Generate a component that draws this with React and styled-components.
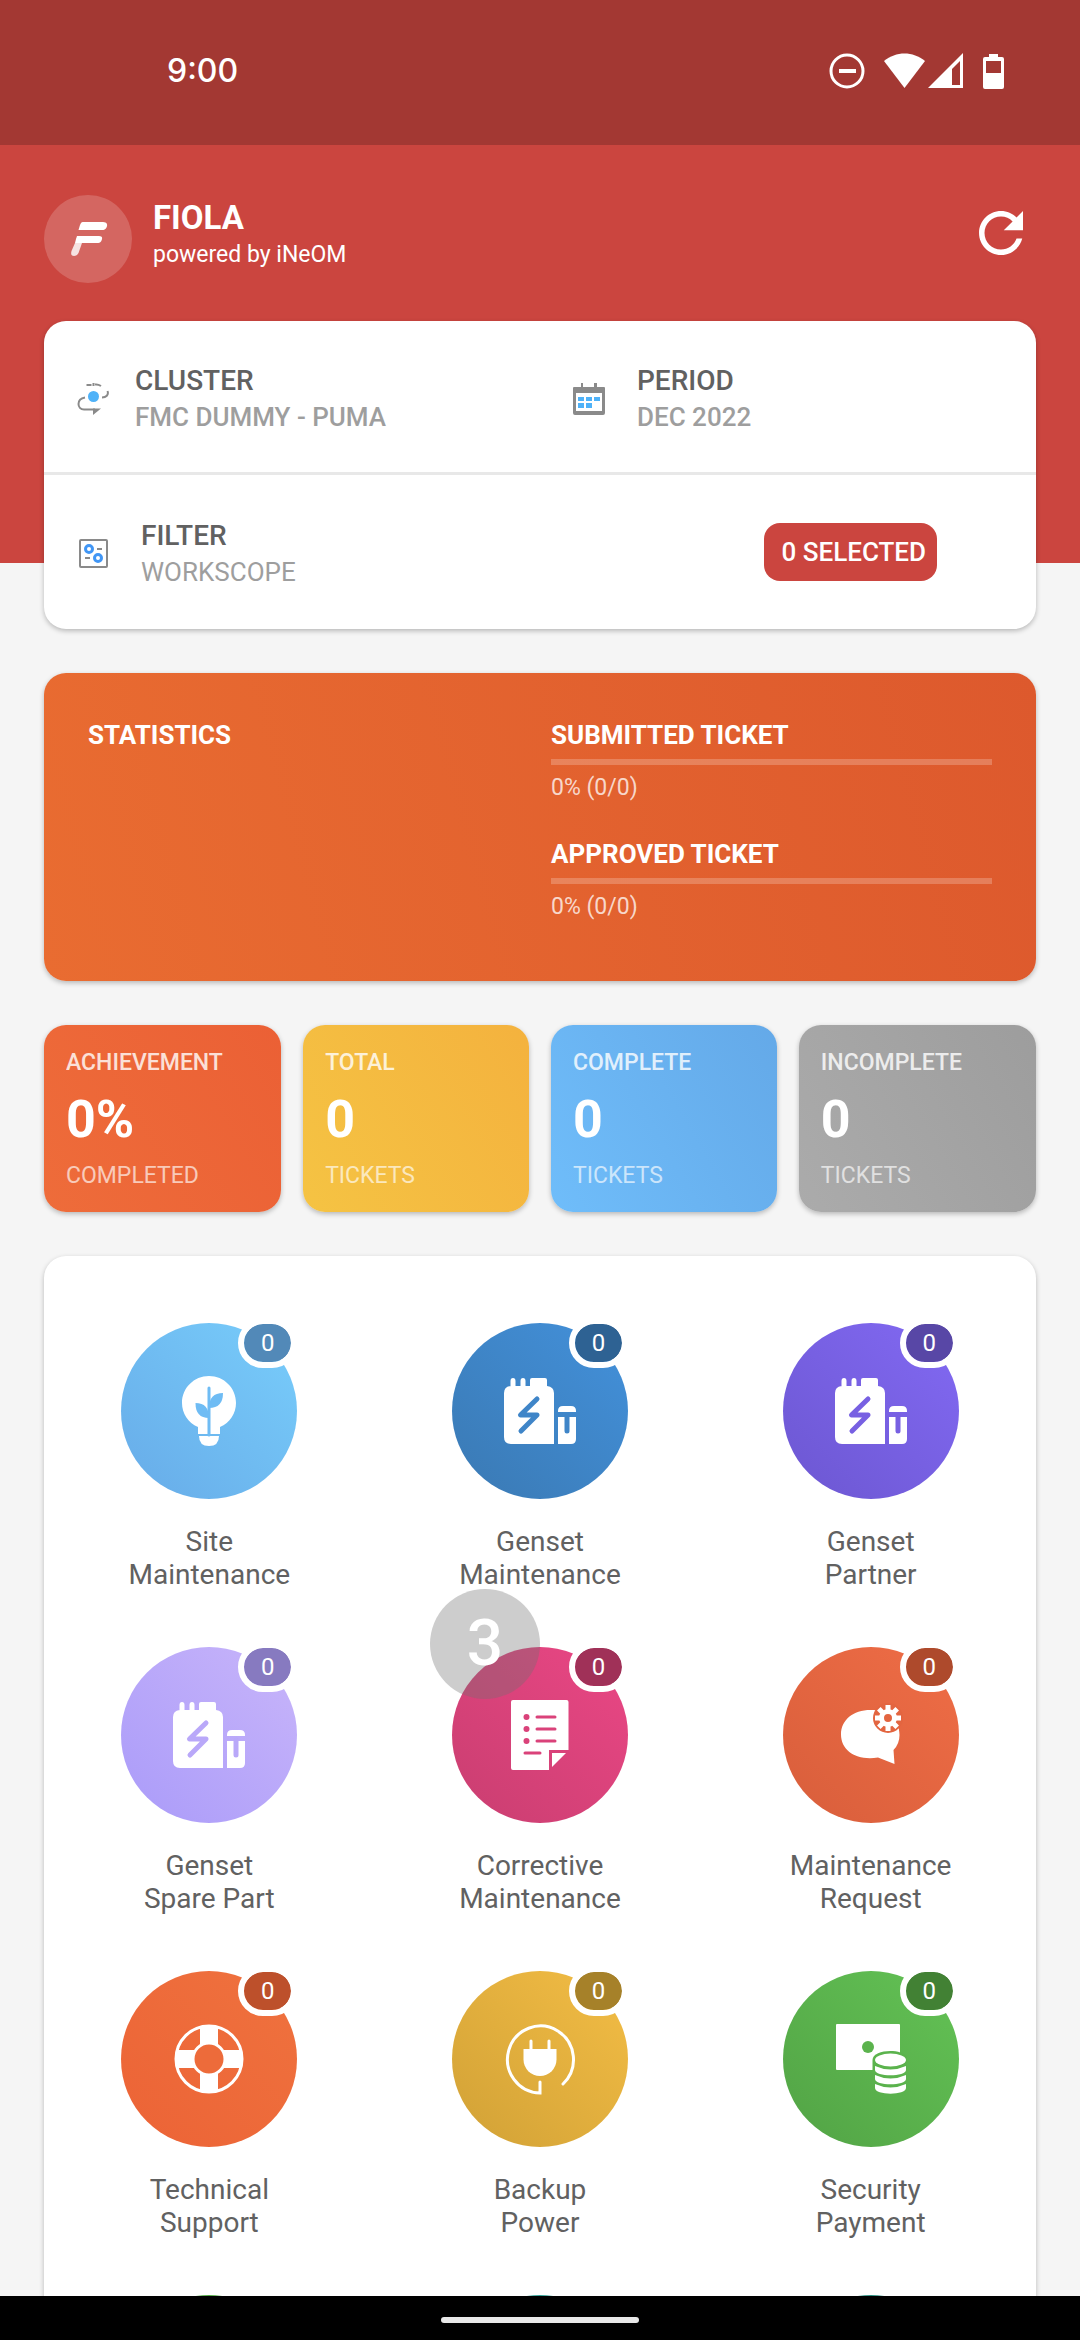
import styled, { createGlobalStyle } from 'styled-components';

const GlobalStyle = createGlobalStyle`
    * {
        box-sizing: border-box;
    }

    body {
        margin: 0;
        background-color: #f5f5f5;
        font-family: Roboto, "Liberation Sans", sans-serif;
    }

    button {
        font-family: inherit;
        border: none;
        background: none;
        padding: 0;
        margin: 0;
        text-align: left;
        cursor: pointer;
    }

    svg {
        display: block;
        flex-shrink: 0;
    }
`;

const Screen = styled.div`
    display: flex;
    flex-direction: column;
    height: 100vh;
    overflow: hidden;
`;

const StatusBar = styled.div`
    display: flex;
    justify-content: space-between;
    align-items: center;
    height: 145px;
    padding: 0 75px 4px 167px;
    background-color: #a33833;
    color: white;
    flex-shrink: 0;
`;

const Clock = styled.span`
    font-family: Inter, Roboto, sans-serif;
    font-size: 32px;
    font-weight: 500;
`;

const StatusIcons = styled.div`
    display: flex;
    align-items: center;
`;

const Body = styled.div`
    flex: 1;
    min-height: 0;
    overflow: hidden;
`;

const Header = styled.header`
    display: flex;
    align-items: flex-start;
    padding: 50px 46px 280px 44px;
    background-color: #cb453f;
    color: white;
`;

const Logo = styled.div`
    display: flex;
    align-items: center;
    justify-content: center;
    width: 88px;
    height: 88px;
    border-radius: 50%;
    background-color: rgba(255, 255, 255, 0.18);
`;

const Brand = styled.div`
    flex: 1;
    padding: 4px 0 0 21px;
`;

const BrandName = styled.h1`
    margin: 0;
    font-size: 33px;
    line-height: 38px;
    font-weight: 700;
`;

const BrandNote = styled.p`
    margin: 0;
    font-size: 23px;
    line-height: 36px;
`;

const RefreshButton = styled.button`
    margin-top: 5px;
    color: white;
`;

const Content = styled.main`
    position: relative;
    display: flex;
    flex-direction: column;
    gap: 44px;
    margin-top: -242px;
    padding: 0 44px;
`;

const Card = styled.section`
    background-color: white;
    border-radius: 22px;
    box-shadow: 0 2px 5px rgba(0, 0, 0, 0.25);
`;

const CardRow = styled.div`
    display: grid;
    grid-template-columns: 1fr 1fr;
    border-bottom: 3px solid #e8e8e8;
`;

const FilterRow = styled.div`
    display: flex;
    align-items: center;
    justify-content: space-between;
    padding: 1px 99px 2px 0;
`;

const Field = styled.button`
    display: flex;
    align-items: center;
    gap: ${({ $gap }) => $gap || '26px'};
    padding: 41px 0 36px 33px;
`;

const FieldLabel = styled.span`
    display: block;
    font-size: 28px;
    line-height: 37px;
    font-weight: 500;
    color: #616161;
`;

const FieldValue = styled.span`
    display: block;
    font-size: 26px;
    line-height: 37px;
    font-weight: ${({ $weight }) => $weight || 500};
    color: #9e9e9e;
`;

const SelectedButton = styled.button`
    padding: 0 11px 0 17px;
    border-radius: 16px;
    background-color: #cb453f;
    color: white;
    font-size: 26px;
    line-height: 58px;
    font-weight: 500;
`;

const StatsCard = styled(Card)`
    display: grid;
    grid-template-columns: 1fr 1fr;
    gap: 22px;
    padding: 44px 44px 57px;
    background: linear-gradient(75deg, #e96c31, #dd592d);
    color: white;
`;

const StatsTitle = styled.h2`
    margin: 0;
    font-size: 26px;
    line-height: 36px;
    font-weight: 700;
`;

const StatsList = styled.div`
    display: flex;
    flex-direction: column;
    gap: 31px;
`;

const Track = styled.div`
    height: 6px;
    margin: 6px 0;
    background-color: rgba(255, 255, 255, 0.22);
`;

const TrackFill = styled.div`
    height: 100%;
    background-color: white;
`;

const TrackText = styled.p`
    margin: 0;
    font-size: 23px;
    line-height: 34px;
    color: rgba(255, 255, 255, 0.75);
`;

const Tiles = styled.div`
    display: grid;
    grid-template-columns: 21fr 20fr 20fr 21fr;
    gap: 22px;
`;

const Tile = styled(Card)`
    padding: 22px 22px 21px;
    background: linear-gradient(60deg, ${({ $from }) => $from}, ${({ $to }) => $to});
    color: white;
`;

const TileLabel = styled.p`
    margin: 0;
    font-size: 23px;
    line-height: 32px;
    font-weight: 500;
    opacity: 0.8;
`;

const TileNumber = styled.p`
    margin: 0;
    font-size: 52px;
    line-height: 82px;
    font-weight: 700;
`;

const TileNote = styled.p`
    margin: 0;
    font-size: 23px;
    line-height: 30px;
    opacity: 0.65;
`;

const MenuCard = styled(Card)`
    display: grid;
    grid-template-columns: repeat(3, 1fr);
    row-gap: 56px;
    padding: 67px 0;
`;

const MenuItem = styled.button`
    display: flex;
    flex-direction: column;
    align-items: center;
`;

const MenuCircle = styled.span`
    position: relative;
    display: flex;
    align-items: center;
    justify-content: center;
    width: 176px;
    height: 176px;
    border-radius: 50%;
    background: linear-gradient(45deg, ${({ $from }) => $from}, ${({ $to }) => $to});
`;

const MenuBadge = styled.span`
    position: absolute;
    top: -5px;
    right: 0;
    min-width: 59px;
    border: 6px solid white;
    border-radius: 25px;
    background-color: ${({ $color }) => $color};
    background-clip: padding-box;
    color: white;
    font-size: 24px;
    line-height: 38px;
    text-align: center;
`;

const MenuLabel = styled.span`
    min-height: 66px;
    margin-top: 26px;
    font-size: 28px;
    line-height: 33px;
    text-align: center;
    white-space: pre-line;
    color: #616161;
`;

/* floats over the menu, like a chat head */
const Bubble = styled.div`
    position: absolute;
    top: 1268px;
    left: 430px;
    width: 110px;
    height: 110px;
    border-radius: 50%;
    background-color: rgba(112, 112, 112, 0.35);
    color: white;
    font-size: 64px;
    line-height: 110px;
    font-weight: 500;
    text-align: center;
`;

const NavBar = styled.div`
    display: flex;
    align-items: center;
    justify-content: center;
    height: 44px;
    padding-top: 4px;
    background-color: black;
    flex-shrink: 0;
`;

const NavHandle = styled.div`
    width: 198px;
    height: 6px;
    border-radius: 3px;
    background-color: #e8e8e8;
`;

const StatusGlyphs = () => (
    <svg width="176" height="38" viewBox="0 0 176 38" fill="white">
        <circle cx="18" cy="19" r="16" fill="none" stroke="white" strokeWidth="3" />
        <rect x="10" y="17" width="17" height="4" />
        <path d="M55 9C67 -1 84 -1 96 9L75.500 36Z" />
        <path fillRule="evenodd" d="M99 36L134 1V36ZM123 33H131V9L123 17Z" />
        <path fillRule="evenodd" d="M160 2h9v3h4q2 0 2 2v28q0 2-2 2h-17q-2 0-2-2v-28q0-2 2-2h4zM157 9v12h15v-12z" />
    </svg>
);

const LogoIcon = () => (
    <svg width="40" height="40" viewBox="0 0 40 40" fill="white">
        <path d="M14.500 3H35C39 3 40 6 38.500 8.500C37.500 10.500 36 11 34 11H10.500L12 6Q13 3 14.500 3Z" />
        <path d="M9 17H31C35 17 34.500 20 33 22.500C32 24 31 24 29 24H7L8 20Z" />
        <path d="M7 24H14L10.500 34Q9 37 6 37Q2 37 3.500 32Z" fill="#f6e3e2" />
    </svg>
);

const RefreshIcon = () => (
    <svg width="66" height="66" viewBox="0 0 24 24" fill="currentColor">
        <path d="M17.650 6.350C16.200 4.900 14.210 4 12 4c-4.420 0-7.990 3.580-7.990 8s3.570 8 7.990 8c3.730 0 6.840-2.550 7.730-6h-2.080c-.82 2.330-3.040 4-5.650 4-3.310 0-6-2.690-6-6s2.690-6 6-6c1.660 0 3.140.69 4.220 1.780L13 11h7V4l-2.350 2.350z" />
    </svg>
);

const ClusterIcon = () => (
    <svg width="32" height="32" viewBox="0 0 32 32" fill="none" stroke="#8a8a8a" strokeWidth="2">
        <circle cx="16.500" cy="13.500" r="5.500" fill="#4fb2f8" stroke="none" />
        <path d="M9.500 2H14.500M16.500 0V3M18 1.500Q21 1 24 3" />
        <path d="M30.500 8C32 12 29 14.500 25 14.500M8 14.500C-1 16 0 26.500 7 26.500H18" />
        <path d="M16 25.500H24L16 32Z" fill="#8a8a8a" stroke="none" />
    </svg>
);

const CalendarIcon = () => (
    <svg width="32" height="32" viewBox="0 0 32 32" fill="#8a8a8a">
        <path fillRule="evenodd" d="M1 4H31Q32 4 32 5V30Q32 32 30 32H2Q0 32 0 30V5Q0 4 1 4ZM3 10V28H29V10Z" />
        <rect x="8" y="0" width="2" height="6" />
        <rect x="21" y="0" width="3" height="6" />
        <path fill="#4fb2f8" d="M5 14h6v4H5zM13 14h6v4h-6zM21 14h6v4h-6zM5 20h6v5H5zM13 20h6v5h-6z" />
    </svg>
);

const FilterIcon = () => (
    <svg width="32" height="32" viewBox="0 0 32 32" fill="none" stroke="#8a8a8a" strokeWidth="2">
        <rect x="3" y="2" width="27" height="27" rx="1" />
        <path d="M20 11h5M8 20h5" />
        <g stroke="#4196f5" strokeWidth="3">
            <circle cx="12" cy="11" r="3.500" />
            <circle cx="21" cy="20" r="3.500" />
        </g>
    </svg>
);

const SiteIcon = ({ cut }) => (
    <svg width="72" height="72" viewBox="0 0 72 72" fill="white">
        <path d="M36 1C51 1 63 13 63 28C63 38 57 48 47 52V59H25V52C15 48 9 38 9 28C9 13 21 1 36 1Z" />
        <path d="M26 61H46Q46 71 36 71Q26 71 26 61Z" />
        <path d="M36 13V60" stroke={cut} strokeWidth="3" strokeLinecap="round" />
        <g fill={cut}>
            <path d="M50 18Q50 33 36 33Q36 18 50 18Z" />
            <path d="M22.500 28Q36 28 36 43Q22.500 43 22.500 28Z" />
        </g>
    </svg>
);

const GensetIcon = ({ cut }) => (
    <svg width="72" height="72" viewBox="0 0 72 72" fill="white">
        <path d="M6.500 12V6Q6.500 3 9 3Q11.500 3 11.500 6V11H16.500V6Q16.500 3 19 3Q21.500 3 21.500 6V11H26V5Q26 3 28 3H41Q43 3 43 5V11Q50 12 50 18V69H7Q0 69 0 62V18Q0 12 6.500 11Z" />
        <path d="M54 37V36Q54 31 59 31H67Q72 31 72 36V37Z" />
        <path d="M54 42H72V64Q72 69 67 69H54Z" />
        <g fill="none" stroke={cut} strokeWidth="5" strokeLinecap="round" strokeLinejoin="round">
            <path d="M33 24L16.500 40H33L17 56" />
            <path d="M63 41V56" />
        </g>
    </svg>
);

const CorrectiveIcon = ({ cut }) => (
    <svg width="72" height="72" viewBox="0 0 72 72" fill="white">
        <path d="M9 1H62.500Q64.500 1 64.500 3V51H45V71H9Q7 71 7 69V3Q7 1 9 1Z" />
        <path d="M48 54H62L48 68Z" />
        <g fill={cut}>
            <circle cx="22.500" cy="18" r="3" />
            <circle cx="22.500" cy="30" r="3" />
            <circle cx="22.500" cy="42" r="3" />
        </g>
        <path d="M33 18H51M33 30H51M33 42H51M21 54H36" stroke={cut} strokeWidth="3" strokeLinecap="round" />
    </svg>
);

const RequestIcon = ({ cut }) => (
    <svg width="72" height="72" viewBox="0 0 72 72" fill="white">
        <path d="M35.500 11C53 11 64.500 20 64.500 36Q64.500 45 58.500 51L59.500 65L43 58.500C22 62 6 52 6 35.500C6 21 18 11 35.500 11Z" />
        <circle cx="53" cy="19" r="15" fill={cut} />
        <g stroke="white" strokeWidth="5">
            <path d="M53 6V12M53 26V32M40 19H46M60 19H66M43.800 9.800L48 14M58 24L62.200 28.200M43.800 28.200L48 24M58 14L62.200 9.800" />
            <circle cx="53" cy="19" r="6.500" fill="none" />
        </g>
    </svg>
);

const SupportIcon = ({ cut }) => (
    <svg width="72" height="72" viewBox="0 0 72 72">
        <g fill="none" stroke="white">
            <circle cx="36" cy="36" r="33" strokeWidth="3" />
            <path d="M36 3V22M36 50V69M3 36H22M50 36H69" strokeWidth="18" />
        </g>
        <circle cx="36" cy="36" r="16" fill={cut} stroke="white" strokeWidth="3" />
    </svg>
);

const BackupIcon = () => (
    <svg width="72" height="72" viewBox="0 0 72 72" fill="none" stroke="white" strokeWidth="3" strokeLinecap="round">
        <path d="M36 59V70A33 33.500 0 1 1 59 61" />
        <path d="M27 18V27M45 18V27" />
        <path d="M19.500 26H52.500V36.500A16.500 16.500 0 0 1 19.500 36.500Z" fill="white" stroke="none" />
    </svg>
);

const PaymentIcon = ({ cut }) => (
    <svg width="72" height="72" viewBox="0 0 72 72" fill="white">
        <rect x="1" y="1" width="64" height="46" rx="1" />
        <circle cx="33" cy="24" r="6" fill={cut} />
        <path d="M37.500 50V37C37.500 25 73 25 73 37V50Z" fill={cut} />
        <ellipse cx="55.500" cy="37" rx="15.500" ry="6.500" />
        <path d="M40 43Q55.500 50 71 43V47C71 54 40 54 40 47Z" />
        <path d="M40 52Q55.500 59 71 52V56C71 63 40 63 40 56Z" />
        <path d="M40 61Q55.500 68 71 61V65C71 72.500 40 72.500 40 65Z" />
    </svg>
);

const stats = [
    { title: 'SUBMITTED TICKET', done: 0, total: 0 },
    { title: 'APPROVED TICKET', done: 0, total: 0 },
];

const tiles = [
    { label: 'ACHIEVEMENT', value: '0%', note: 'COMPLETED', from: '#ee6c3a', to: '#eb6035' },
    { label: 'TOTAL', value: '0', note: 'TICKETS', from: '#f5c343', to: '#f4b23e' },
    { label: 'COMPLETE', value: '0', note: 'TICKETS', from: '#6fbdfa', to: '#64a9e8' },
    { label: 'INCOMPLETE', value: '0', note: 'TICKETS', from: '#ababab', to: '#9d9d9d' },
];

const menu = [
    { label: 'Site\nMaintenance', icon: SiteIcon, from: '#67abe8', to: '#78cdfb', cut: '#6fbcf4', badge: '#5289b8' },
    { label: 'Genset\nMaintenance', icon: GensetIcon, from: '#3a79b3', to: '#4391db', cut: '#3f85c8', badge: '#2e6293' },
    { label: 'Genset\nPartner', icon: GensetIcon, from: '#6c57d1', to: '#8269f3', cut: '#7760e2', badge: '#5847a6' },
    { label: 'Genset\nSpare Part', icon: GensetIcon, from: '#aa9bf9', to: '#c8b5fa', cut: '#b9a8f9', badge: '#877ac0' },
    { label: 'Corrective\nMaintenance', icon: CorrectiveIcon, from: '#c93e70', to: '#ea4785', cut: '#da427a', badge: '#a03158' },
    { label: 'Maintenance\nRequest', icon: RequestIcon, from: '#d85e3b', to: '#ef6d46', cut: '#e36540', badge: '#ae4a2c' },
    { label: 'Technical\nSupport', icon: SupportIcon, from: '#ec6336', to: '#ef723e', cut: '#ed6b3a', badge: '#bd502b' },
    { label: 'Backup\nPower', icon: BackupIcon, from: '#d1a136', to: '#f3bd45', cut: '#e2af3e', badge: '#a68129' },
    { label: 'Security\nPayment', icon: PaymentIcon, from: '#52a345', to: '#63c255', cut: '#5bb34d', badge: '#428134' },
    { from: '#3f8f36', to: '#55b047' },
    { from: '#1f8a80', to: '#35a79b' },
    { from: '#1f7a6c', to: '#2c9484' },
];

const percent = ({ done, total }) => (total ? Math.round((done / total) * 100) : 0);

export default function App() {
    return (
        <>
            <GlobalStyle />
            <Screen>
                <StatusBar>
                    <Clock>9:00</Clock>
                    <StatusIcons>
                        <StatusGlyphs />
                    </StatusIcons>
                </StatusBar>
                <Body>
                    <Header>
                        <Logo>
                            <LogoIcon />
                        </Logo>
                        <Brand>
                            <BrandName>FIOLA</BrandName>
                            <BrandNote>powered by iNeOM</BrandNote>
                        </Brand>
                        <RefreshButton type="button">
                            <RefreshIcon />
                        </RefreshButton>
                    </Header>
                    <Content>
                        <Card>
                            <CardRow>
                                <Field type="button">
                                    <ClusterIcon />
                                    <span>
                                        <FieldLabel>CLUSTER</FieldLabel>
                                        <FieldValue>FMC DUMMY - PUMA</FieldValue>
                                    </span>
                                </Field>
                                <Field type="button" $gap="32px">
                                    <CalendarIcon />
                                    <span>
                                        <FieldLabel>PERIOD</FieldLabel>
                                        <FieldValue>DEC 2022</FieldValue>
                                    </span>
                                </Field>
                            </CardRow>
                            <FilterRow>
                                <Field type="button" $gap="32px">
                                    <FilterIcon />
                                    <span>
                                        <FieldLabel>FILTER</FieldLabel>
                                        <FieldValue $weight={400}>WORKSCOPE</FieldValue>
                                    </span>
                                </Field>
                                <SelectedButton type="button">0 SELECTED</SelectedButton>
                            </FilterRow>
                        </Card>
                        <StatsCard>
                            <StatsTitle>STATISTICS</StatsTitle>
                            <StatsList>
                                {stats.map((stat) => (
                                    <div key={stat.title}>
                                        <StatsTitle as="h3">{stat.title}</StatsTitle>
                                        <Track>
                                            <TrackFill style={{ width: `${percent(stat)}%` }} />
                                        </Track>
                                        <TrackText>{`${percent(stat)}% (${stat.done}/${stat.total})`}</TrackText>
                                    </div>
                                ))}
                            </StatsList>
                        </StatsCard>
                        <Tiles>
                            {tiles.map((tile) => (
                                <Tile key={tile.label} $from={tile.from} $to={tile.to}>
                                    <TileLabel>{tile.label}</TileLabel>
                                    <TileNumber>{tile.value}</TileNumber>
                                    <TileNote>{tile.note}</TileNote>
                                </Tile>
                            ))}
                        </Tiles>
                        <MenuCard>
                            {menu.map(({ label, icon: Icon, from, to, cut, badge }) => (
                                <MenuItem type="button" key={label || from}>
                                    <MenuCircle $from={from} $to={to}>
                                        {Icon && <Icon cut={cut} />}
                                        {badge && <MenuBadge $color={badge}>0</MenuBadge>}
                                    </MenuCircle>
                                    <MenuLabel>{label}</MenuLabel>
                                </MenuItem>
                            ))}
                        </MenuCard>
                        <Bubble>3</Bubble>
                    </Content>
                </Body>
                <NavBar>
                    <NavHandle />
                </NavBar>
            </Screen>
        </>
    );
}
